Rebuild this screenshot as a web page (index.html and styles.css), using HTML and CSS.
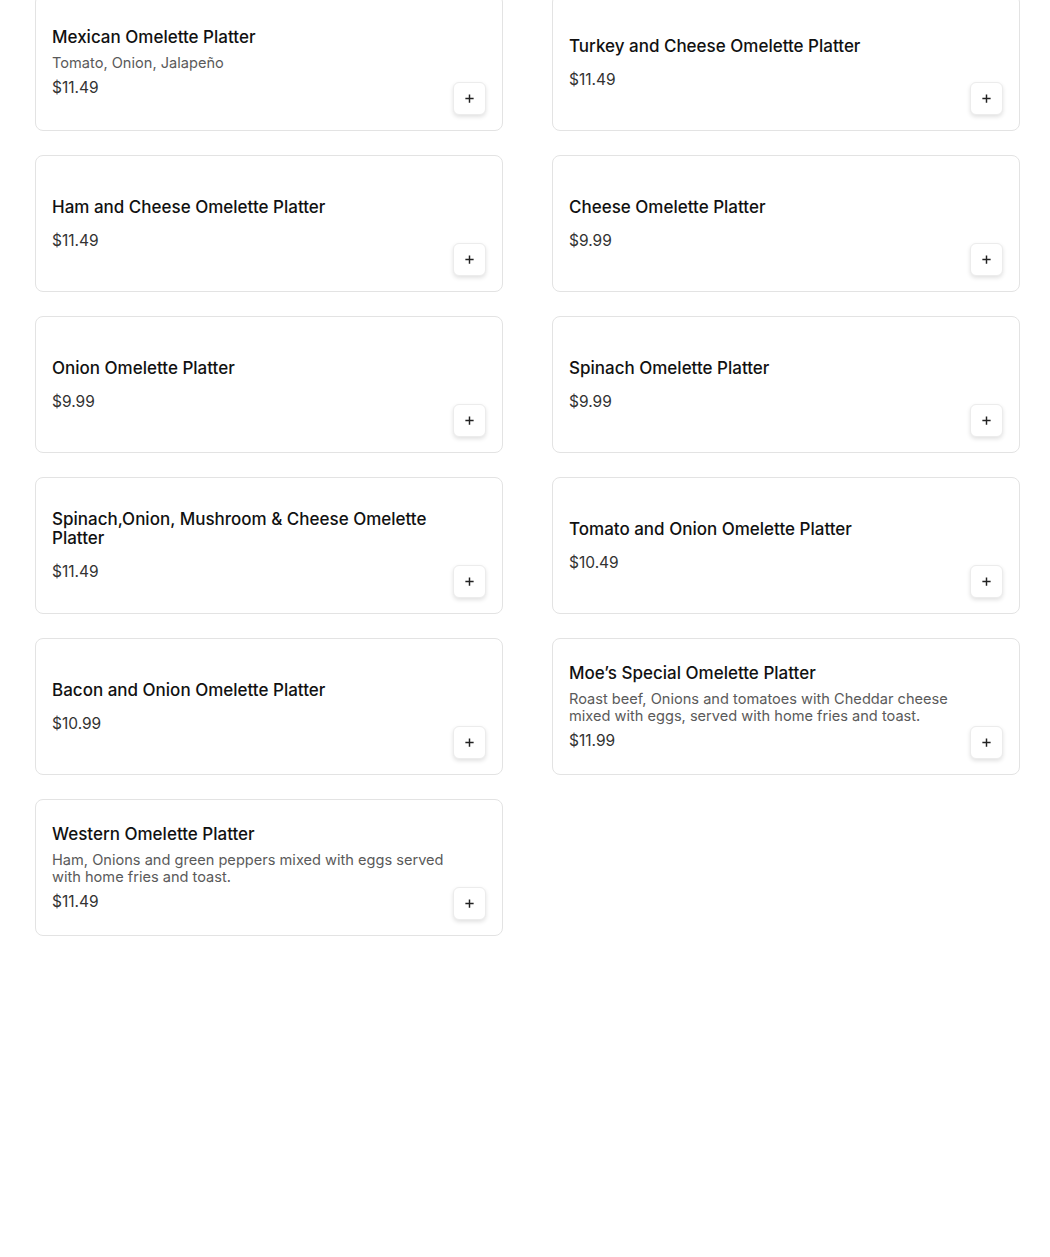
FILE: index.html
```html
<!DOCTYPE html>
<html lang="en">

<head>
    <meta charset="UTF-8">
    <meta name="viewport" content="width=device-width, initial-scale=1.0">
    <title>Omelette Platters</title>
    <link rel="stylesheet" href="styles.css">
</head>

<body>
    <div class="menu-grid">
        <div class="item-card">
            <div class="item-info">
                <h3 class="item-name">Mexican Omelette Platter</h3>
                <p class="item-desc">Tomato, Onion, Jalapeño</p>
                <p class="item-price">$11.49</p>
            </div>
            <button class="add-btn" aria-label="Add"><svg viewBox="0 0 12 12"><path d="M6 1.5v9M1.5 6h9" /></svg></button>
        </div>
        <div class="item-card">
            <div class="item-info">
                <h3 class="item-name">Turkey and Cheese Omelette Platter</h3>
                <p class="item-price">$11.49</p>
            </div>
            <button class="add-btn" aria-label="Add"><svg viewBox="0 0 12 12"><path d="M6 1.5v9M1.5 6h9" /></svg></button>
        </div>
        <div class="item-card">
            <div class="item-info">
                <h3 class="item-name">Ham and Cheese Omelette Platter</h3>
                <p class="item-price">$11.49</p>
            </div>
            <button class="add-btn" aria-label="Add"><svg viewBox="0 0 12 12"><path d="M6 1.5v9M1.5 6h9" /></svg></button>
        </div>
        <div class="item-card">
            <div class="item-info">
                <h3 class="item-name">Cheese Omelette Platter</h3>
                <p class="item-price">$9.99</p>
            </div>
            <button class="add-btn" aria-label="Add"><svg viewBox="0 0 12 12"><path d="M6 1.5v9M1.5 6h9" /></svg></button>
        </div>
        <div class="item-card">
            <div class="item-info">
                <h3 class="item-name">Onion Omelette Platter</h3>
                <p class="item-price">$9.99</p>
            </div>
            <button class="add-btn" aria-label="Add"><svg viewBox="0 0 12 12"><path d="M6 1.5v9M1.5 6h9" /></svg></button>
        </div>
        <div class="item-card">
            <div class="item-info">
                <h3 class="item-name">Spinach Omelette Platter</h3>
                <p class="item-price">$9.99</p>
            </div>
            <button class="add-btn" aria-label="Add"><svg viewBox="0 0 12 12"><path d="M6 1.5v9M1.5 6h9" /></svg></button>
        </div>
        <div class="item-card">
            <div class="item-info">
                <h3 class="item-name">Spinach,Onion, Mushroom &amp; Cheese Omelette Platter</h3>
                <p class="item-price">$11.49</p>
            </div>
            <button class="add-btn" aria-label="Add"><svg viewBox="0 0 12 12"><path d="M6 1.5v9M1.5 6h9" /></svg></button>
        </div>
        <div class="item-card">
            <div class="item-info">
                <h3 class="item-name">Tomato and Onion Omelette Platter</h3>
                <p class="item-price">$10.49</p>
            </div>
            <button class="add-btn" aria-label="Add"><svg viewBox="0 0 12 12"><path d="M6 1.5v9M1.5 6h9" /></svg></button>
        </div>
        <div class="item-card">
            <div class="item-info">
                <h3 class="item-name">Bacon and Onion Omelette Platter</h3>
                <p class="item-price">$10.99</p>
            </div>
            <button class="add-btn" aria-label="Add"><svg viewBox="0 0 12 12"><path d="M6 1.5v9M1.5 6h9" /></svg></button>
        </div>
        <div class="item-card">
            <div class="item-info">
                <h3 class="item-name">Moe’s Special Omelette Platter</h3>
                <p class="item-desc">Roast beef, Onions and tomatoes with Cheddar cheese mixed with eggs, served with home fries and toast.</p>
                <p class="item-price">$11.99</p>
            </div>
            <button class="add-btn" aria-label="Add"><svg viewBox="0 0 12 12"><path d="M6 1.5v9M1.5 6h9" /></svg></button>
        </div>
        <div class="item-card">
            <div class="item-info">
                <h3 class="item-name">Western Omelette Platter</h3>
                <p class="item-desc">Ham, Onions and green peppers mixed with eggs served with home fries and toast.</p>
                <p class="item-price">$11.49</p>
            </div>
            <button class="add-btn" aria-label="Add"><svg viewBox="0 0 12 12"><path d="M6 1.5v9M1.5 6h9" /></svg></button>
        </div>
    </div>
</body>

</html>
```
FILE: styles.css
```css
body {
    margin: 0;
    background-color: #ffffff;
    font-family: Inter, 'Noto Sans', sans-serif;
    color: #1a1a1a;
}

.menu-grid {
    display: grid;
    grid-template-columns: repeat(2, 468px);
    column-gap: 49px;
    row-gap: 24px;
    padding-left: 35px;
    margin-top: -6px;
}

.item-card {
    display: flex;
    height: 137px;
    box-sizing: border-box;
    padding: 16px 16px 15px 16px;
    border: 1px solid #e3e3e3;
    border-radius: 8px;
    background-color: #ffffff;
}

.item-info {
    flex: 1;
    display: flex;
    flex-direction: column;
    justify-content: center;
}

.item-name {
    margin: 0 0 8px 0;
    font-size: 17px;
    line-height: 19px;
    font-weight: 500;
    color: #111111;
}

.item-desc {
    margin: 0;
    font-size: 14.6px;
    line-height: 17px;
    color: #5a5a5a;
}

.item-price {
    margin: 6px 0 0 0;
    font-size: 15.5px;
    line-height: 20px;
    color: #333333;
}

.add-btn {
    flex-shrink: 0;
    align-self: flex-end;
    width: 33px;
    height: 33px;
    padding: 0;
    display: flex;
    align-items: center;
    justify-content: center;
    background-color: #ffffff;
    border: 1px solid #ececec;
    border-radius: 6px;
    box-shadow: 0 2px 4px rgba(0, 0, 0, 0.12);
    cursor: pointer;
}

.add-btn svg {
    width: 11px;
    height: 11px;
    stroke: #222222;
    stroke-width: 1.6;
    fill: none;
}
```
